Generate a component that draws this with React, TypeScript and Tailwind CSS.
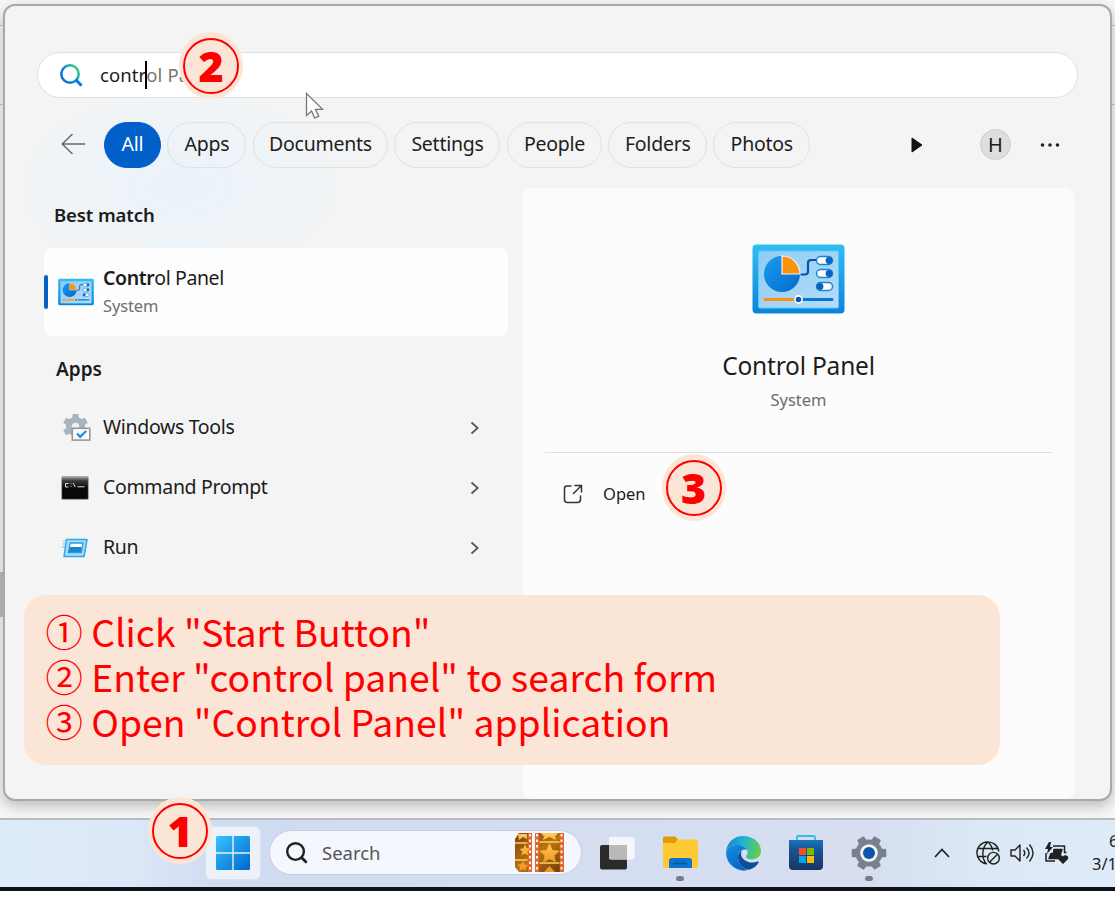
import type { ReactNode } from "react";

const chips = [
  { label: "All", box: "w-[57px] bg-[#005fc8] border-[#005fc8] text-white" },
  { label: "Apps", box: "w-[79px] border-[#e0e1e2] text-[#1d1d1d]" },
  { label: "Documents", box: "w-[135px] border-[#e0e1e2] text-[#1d1d1d]" },
  { label: "Settings", box: "w-[106px] border-[#e0e1e2] text-[#1d1d1d]" },
  { label: "People", box: "w-[95px] border-[#e0e1e2] text-[#1d1d1d]" },
  { label: "Folders", box: "w-[98.500px] border-[#e0e1e2] text-[#1d1d1d]" },
  { label: "Photos", box: "w-[96.500px] border-[#e0e1e2] text-[#1d1d1d]" },
];

function ControlPanelIcon({ className }: { className: string }) {
  return (
    <svg viewBox="0 0 93 70" className={className}>
      <defs>
        <linearGradient id="cpFrame" x1="0" y1="0" x2="0" y2="1">
          <stop offset="0" stopColor="#2fbdf6" />
          <stop offset="1" stopColor="#0b84dc" />
        </linearGradient>
        <linearGradient id="cpFace" x1="0" y1="0" x2="1" y2="1">
          <stop offset="0" stopColor="#8fcdf3" />
          <stop offset="1" stopColor="#b4dcf8" />
        </linearGradient>
        <linearGradient id="cpPie" x1="0" y1="0" x2="1" y2="1">
          <stop offset="0" stopColor="#1a9cf0" />
          <stop offset="1" stopColor="#0568cc" />
        </linearGradient>
      </defs>
      <rect x="0.5" y="0.5" width="92" height="69" rx="4" fill="url(#cpFrame)" />
      <rect x="6.5" y="7" width="80" height="57" rx="1.5" fill="url(#cpFace)" stroke="#62c6f7" />
      <circle cx="30" cy="30" r="18" fill="url(#cpPie)" />
      <path d="M30 30V12a18 18 0 0 1 18 18z" fill="#ff9208" stroke="#e8f5fd" strokeWidth="1.2" />
      <path d="M48.500 30.500h4.500q3 0 3-3V19q0-3 3-3h6" fill="none" stroke="#0754a8" strokeWidth="2.200" />
      {[16.5, 29.5, 42.5].map((y, i) => (
        <g key={y}>
          <rect x="64.500" y={y - 4} width="16" height="8" rx="4" fill="#fff" stroke="#1685d9" strokeWidth="1.5" />
          <circle cx={i === 2 ? 68 : 77} cy={y} r="3.400" fill="#0863bd" />
        </g>
      ))}
      <path d="M13 55.500h31" stroke="#fa9111" strokeWidth="3" strokeLinecap="round" />
      <path d="M50 55.500h30" stroke="#0875d2" strokeWidth="3" strokeLinecap="round" />
      <circle cx="46.500" cy="55.500" r="3.600" fill="#075cb2" stroke="#fff" strokeWidth="1.600" />
    </svg>
  );
}

function gear(cx: number, cy: number, teeth: number, outer: number, inner: number, start: number) {
  const points: string[] = [];
  const step = Math.PI / teeth;
  for (let i = 0; i < teeth; i++) {
    const a = i * 2 * step + start;
    [
      [-1, inner],
      [-0.55, inner],
      [-0.36, outer],
      [0.36, outer],
      [0.55, inner],
    ].forEach(([k, r]) => {
      points.push(`${cx + Math.cos(a + k * step) * r},${cy + Math.sin(a + k * step) * r}`);
    });
  }
  return points.join(" ");
}

function ToolsIcon() {
  return (
    <svg viewBox="0 0 28 28" className="ml-0.5 h-7 w-7">
      <polygon points={gear(12.5, 12.5, 6, 12, 8.8, -Math.PI / 2)} fill="#a7b3bf" stroke="#a7b3bf" strokeWidth="1.500" strokeLinejoin="round" />
      <circle cx="12.500" cy="12.500" r="3.800" fill="#edf0f2" />
      <rect x="9.300" y="14.300" width="17.500" height="11.800" fill="#fafbfb" stroke="#9b9691" strokeWidth="1.600" />
      <path d="m14 19.500 3.200 3.300 6-5.800" fill="none" stroke="#258be7" strokeWidth="2.300" />
    </svg>
  );
}

function PromptIcon() {
  return (
    <svg viewBox="0 0 28 24" className="h-6 w-7">
      <defs>
        <linearGradient id="cmdBar" x1="0" y1="0" x2="0" y2="1">
          <stop offset="0" stopColor="#a9a9a9" />
          <stop offset="0.180" stopColor="#3b3b3b" />
          <stop offset="0.500" stopColor="#080808" />
        </linearGradient>
      </defs>
      <rect x="0.600" y="0.600" width="26.800" height="22.800" rx="1" fill="url(#cmdBar)" stroke="#aaa" />
      <path d="M7.500 7.500H4.500V11h3M10 7.500v.8M10 10.200v.8M12 7l2.300 4M16.500 10.800h7" fill="none" stroke="#ddd" strokeWidth="1" />
    </svg>
  );
}

function RunIcon() {
  return (
    <svg viewBox="0 0 28 20" className="h-5 w-7">
      <path d="M5.500 1.500h20.500l-3 17H3z" fill="#a8dcfa" stroke="#2ba9ec" strokeWidth="1.500" strokeLinejoin="round" />
      <path d="M9.200 5h12.800l-1.800 9.500H7.400z" fill="#fff" stroke="#2a9ce2" strokeWidth="1.300" />
      <path d="M8.600 9h12.200l-1 5H7.800z" fill="#1686d6" />
      <path d="M2 3h3.500M1.500 6h3.500M1 9h3.500" stroke="#64bff0" strokeWidth="1" />
    </svg>
  );
}

function Search({ className, stroke }: { className: string; stroke: string }) {
  return (
    <svg viewBox="0 0 24 24" className={className} fill="none" stroke={stroke} strokeLinecap="round">
      <defs>
        <linearGradient id="lens" x1="0" y1="1" x2="1" y2="0.200">
          <stop offset="0.250" stopColor="#0873d8" />
          <stop offset="0.550" stopColor="#1689cf" />
          <stop offset="1" stopColor="#3ed07c" />
        </linearGradient>
      </defs>
      <circle cx="11" cy="11" r="8.700" strokeWidth="2.500" />
      <path d="m17.700 17.700 4 4" strokeWidth="3" stroke={stroke === "#202020" ? stroke : "#0873d8"} />
    </svg>
  );
}

function Badge({ value, place }: { value: string; place: string }) {
  return (
    <div className={`absolute flex h-[67px] w-16 items-center justify-center rounded-[50%] bg-[#fbe5d6] ${place}`}>
      <div className="flex h-14 w-14 items-center justify-center rounded-full border-2 border-[#f00] font-['Open_Sans','Noto_Sans',sans-serif] text-[43px] leading-none font-extrabold text-[#f00] not-italic">
        <span className="h-[42px] leading-[41px]">{value}</span>
      </div>
    </div>
  );
}

function ResultRow({ icon, label }: { icon: ReactNode; label: string }) {
  return (
    <div className="flex h-[60px] items-center">
      <div className="flex w-[59px] justify-start pl-[17px]">{icon}</div>
      <span className="-mt-px grow text-[19.500px] tracking-[-0.330px]">{label}</span>
      <svg viewBox="0 0 10 14" className="mr-7 h-3.5 w-2.5" fill="none" stroke="#555" strokeWidth="1.700">
        <path d="m1.500 1.500 6.200 5.500-6.200 5.500" />
      </svg>
    </div>
  );
}

function SearchWindow() {
  return (
    <section className="mt-1 ml-[3px] flex h-[797px] w-[1109px] shrink-0 flex-col rounded-[12px] border-2 border-[#a9a9a9] bg-[#f4f4f4] bg-[radial-gradient(ellipse_200px_120px_at_175px_180px,#eaf3fa,#f4f4f4)] shadow-[0_5px_14px_rgba(0,0,0,0.250)]">
      <div className="mt-[46px] ml-8 flex h-[46px] w-[1041px] shrink-0 items-center rounded-full border border-[#dfe0e1] bg-white pl-[21px]">
        <Search className="h-6 w-6" stroke="url(#lens)" />
        <div className="-mt-px ml-[17px] flex items-center text-[18.500px] tracking-[0.100px]">
          <span>contr</span>
          <span className="-mx-px h-7 w-0.5 bg-black" />
          <span className="text-[#777]">ol Pa</span>
        </div>
      </div>

      <nav className="mt-[23.500px] flex h-[46px] shrink-0 items-center pl-14">
        <svg viewBox="0 0 24 22" className="-mt-px h-[22px] w-6" fill="none" stroke="#666" strokeWidth="1.400">
          <path d="M24 11H1M11.500 1 1.200 11l10.300 10" />
        </svg>
        <div className="ml-[18.500px] flex gap-[6.500px]">
          {chips.map((c) => (
            <button key={c.label} className={`flex h-[46px] items-center justify-center rounded-full border-[1.500px] pb-px pl-px text-[19.500px] tracking-[-0.250px] ${c.box}`}>
              <span>{c.label}</span>
            </button>
          ))}
        </div>
        <svg viewBox="0 0 12 16" className="ml-[101px] h-4 w-3" fill="#111" stroke="#111" strokeLinejoin="round">
          <path d="M1 1v14l10-7z" />
        </svg>
        <span className="ml-[57px] flex h-[31px] w-[31px] items-center justify-center rounded-full border border-[#ccc] bg-[#dedede] pl-px text-[20px]">H</span>
        <svg viewBox="0 0 20 4" className="ml-[29px] h-1 w-5" fill="#222">
          <circle cx="2.500" cy="2" r="1.800" />
          <circle cx="10" cy="2" r="1.800" />
          <circle cx="17.500" cy="2" r="1.800" />
        </svg>
      </nav>

      <div className="mt-[20.500px] flex grow">
        <div className="ml-[39px] flex w-[464px] flex-col">
          <h2 className="mt-[13px] ml-2.5 h-7 text-[18.500px] leading-7 font-semibold tracking-[-0.100px]">Best match</h2>
          <div className="mt-[19px] flex h-[88px] items-center rounded-md bg-[#fdfdfd]">
            <span className="h-[34px] w-1 rounded bg-[#0562c5]" />
            <ControlPanelIcon className="ml-2.5 h-[28px] w-[36px]" />
            <div className="ml-[9px] flex flex-col">
              <span className="h-7 text-[19.500px] leading-7 tracking-[-0.400px]">
                <b className="font-semibold">Contr</b>ol Panel
              </span>
              <span className="h-7 text-[16.500px] leading-7 tracking-[-0.150px] text-[#707070]">System</span>
            </div>
          </div>
          <h2 className="mt-[19px] ml-3 h-7 text-[19px] leading-7 font-semibold">Apps</h2>
          <div className="mt-[14.500px] flex flex-col">
            <ResultRow icon={<ToolsIcon />} label="Windows Tools" />
            <ResultRow icon={<PromptIcon />} label="Command Prompt" />
            <ResultRow icon={<RunIcon />} label="Run" />
          </div>
        </div>

        <div className="ml-[15px] flex w-[551px] flex-col items-center rounded-lg bg-[#fcfcfc]">
          <ControlPanelIcon className="mt-14 h-[70px] w-[93px]" />
          <span className="mt-[34px] h-9 text-[24.500px] leading-9 tracking-[-0.200px]">Control Panel</span>
          <span className="mt-0.5 h-7 text-[16.500px] leading-7 text-[#6e6e6e]">System</span>
          <div className="mt-[38px] h-px w-[507px] bg-[#dedede]" />
          <div className="mt-[27px] flex h-7 w-full items-center pl-10">
            <svg viewBox="0 0 20 20" className="h-5 w-5" fill="none" stroke="#333" strokeWidth="1.500" strokeLinecap="round" strokeLinejoin="round">
              <path d="M8 2H4Q1.500 2 1.500 4.500v11Q1.500 18.500 4.500 18.500h10q3 0 3-3V12M12 1.500h6.500V8M18.200 1.800 10.500 9.500" />
            </svg>
            <span className="ml-5 text-[16.500px]">Open</span>
          </div>
        </div>
      </div>
    </section>
  );
}

function FilmIcon() {
  return (
    <svg viewBox="0 0 49 39" className="h-[39px] w-[49px]">
      <defs>
        <linearGradient id="film" x1="0" y1="0" x2="1" y2="1">
          <stop offset="0" stopColor="#7d3f0b" />
          <stop offset="0.500" stopColor="#b87412" />
          <stop offset="1" stopColor="#6b390b" />
        </linearGradient>
        <linearGradient id="starFill" x1="0" y1="0" x2="0" y2="1">
          <stop offset="0" stopColor="#ffc857" />
          <stop offset="1" stopColor="#f09422" />
        </linearGradient>
        <clipPath id="filmClip">
          <path d="M4 0h13v39H4L0 34V6zM20 0h29v39H20z" />
        </clipPath>
      </defs>
      <g clipPath="url(#filmClip)">
        <path d="M0 0h17v39H0zM20 0h29v39H20z" fill="url(#film)" />
        <path d="M15 0v39M22 0v39M47 0v39" stroke="#e2662e" strokeWidth="4.500" />
        <path d="M15 1v39M22 1v39M46.500 1v39" stroke="#fff0d8" strokeWidth="2" strokeDasharray="2.500 3" />
        <path d="M0 10h12.500M0 27h12.500M24.500 9h20M24.500 30h20" stroke="#ffd056" strokeWidth="1.500" />
        <path d="m34.500 10 3 7 7.200.8-5.200 4.800 1.500 7.200-6.500-3.700-6.500 3.700 1.500-7.200-5.200-4.800 7.200-.8z" fill="url(#starFill)" />
        <path d="m10 11 1.700 4 3.300.5-2.500 3 .7 4-3.200-2-3.500 2 .7-4L4.500 16l4-.8zM8 28l1.500 3.500 4 .5-3 2.500.7 3.500-3.200-2-3.500 2 .7-4L2 32l4-.8zM26 0h17l-3 3.500 1 3.500-6.500-3L28 7l1-3.500zM3 1h9v5L8 4 4 7zM29 39l5.500-6 5.500 6z" fill="url(#starFill)" />
      </g>
    </svg>
  );
}

function Slot({ children, running }: { children: ReactNode; running?: boolean }) {
  return (
    <div className="flex h-[68px] w-[36px] flex-col items-center pt-[16px]">
      <div className="flex h-9 w-9 items-center justify-center">{children}</div>
      {running && <span className="mt-[5px] h-[5px] w-2 rounded-full bg-[#777d87]" />}
    </div>
  );
}

function Taskbar() {
  return (
    <footer className="flex h-[69px] w-full shrink-0 items-center overflow-hidden border-t-2 border-[#b5bac3] bg-[linear-gradient(90deg,#deebf8_0%,#dce8f7_12%,#cfdbf1_20%,#d5def1_50%,#d6def0_78%,#dce8f6_88%,#dfebf8_100%)] pb-0.5">
      <div className="ml-[205px] flex h-[54px] w-14 shrink-0 items-center justify-center rounded-md border border-[#dce1ed] bg-[#edf1fa]">
        <svg viewBox="0 0 34 34" className="h-[34px] w-[34px]">
          <defs>
            <linearGradient id="win" gradientUnits="userSpaceOnUse" x1="0" y1="0" x2="34" y2="34">
              <stop offset="0" stopColor="#38c3ff" />
              <stop offset="1" stopColor="#0067cf" />
            </linearGradient>
          </defs>
          <path d="M1.500 0H16.300v16.300H0V1.500Q0 0 1.500 0zM17.700 0h14.800Q34 0 34 1.500V16.300H17.700zM0 17.700h16.300V34H1.500Q0 34 0 32.500zM17.700 17.700H34v14.800q0 1.500-1.500 1.500H17.700z" fill="url(#win)" />
        </svg>
      </div>
      <div className="ml-2 flex h-[45px] w-[313px] shrink-0 items-center rounded-full border border-[#c5cde0] bg-[#f4f7fd] pl-[15px]">
        <Search className="h-[23px] w-[23px]" stroke="#202020" />
        <span className="ml-3.5 grow text-[18.500px] text-[#555]">Search</span>
        <div className="mr-[17px]"><FilmIcon /></div>
      </div>
      <div className="ml-[17px] flex shrink-0 gap-[27px]">
        <Slot>
          <svg viewBox="0 0 36 36" className="h-9 w-9">
            <rect x="1" y="10" width="27" height="24.500" rx="2" fill="#2b2b2b" />
            <rect x="10" y="2" width="25.500" height="22.500" rx="2" fill="#f6f7f8" fillOpacity="0.950" />
            <path d="M10 10h18v14.500H12q-2 0-2-2z" fill="#b9b9b9" />
          </svg>
        </Slot>
        <Slot running>
          <svg viewBox="0 0 36 36" className="h-9 w-9">
            <path d="M1 2.500q0-1 1-1h11l3 3-3 4H1z" fill="#e39a09" />
            <path d="M1 8h12l3-3.500h18q2 0 2 2V31q0 2-2 2H3q-2 0-2-2z" fill="#ffc934" />
            <path d="M7 33v-7q0-3 3-3h17q3 0 3 3v7z" fill="#0c73ce" />
            <path d="M11 28.500h14" stroke="#07539e" strokeWidth="1.500" />
          </svg>
        </Slot>
        <Slot>
          <svg viewBox="0 0 36 36" className="h-9 w-9">
            <defs>
              <linearGradient id="edgeTop" x1="0" y1="0.300" x2="1" y2="0.500">
                <stop offset="0" stopColor="#1687d1" />
                <stop offset="0.500" stopColor="#26b7cf" />
                <stop offset="1" stopColor="#62d144" />
              </linearGradient>
              <linearGradient id="edgeMid" x1="0" y1="0" x2="0.700" y2="1">
                <stop offset="0" stopColor="#168ee2" />
                <stop offset="1" stopColor="#0563c2" />
              </linearGradient>
            </defs>
            <path d="M1 17C2 7 9 1 18.500 1 28 1 36 7.500 36 16c0 5.500-4.500 8.500-9 8.500-4 0-6-1.500-6-2.800 0-.9 1.700-1.900 1.700-4.200C22.500 13 18 10 12.500 10 7 10 3 12.500 1 17z" fill="url(#edgeTop)" />
            <path d="M1 18C2 12.500 7 10 12.500 10c4.500 0 8 2 9.500 5-5-1.500-9 1.500-9 7 0 7 5 12.500 11 12.800A18 18 0 0 1 1 18z" fill="url(#edgeMid)" />
            <path d="M17 15c-3 2-4 4-4 7 0 7.500 6 13.500 12 12.500 4-1.300 7-4 8.500-7 .4-.8-.3-1.300-1.100-.9-6 2.800-16-.5-16.400-7.600 0-1.600.3-2.900 1-4z" fill="#0d4e99" />
          </svg>
        </Slot>
        <Slot>
          <svg viewBox="0 0 36 36" className="h-9 w-9">
            <defs>
              <linearGradient id="store" x1="0" y1="0" x2="0" y2="1">
                <stop offset="0" stopColor="#1475be" />
                <stop offset="0.300" stopColor="#1a5596" />
                <stop offset="1" stopColor="#153565" />
              </linearGradient>
            </defs>
            <path d="M9 7V2.500Q9 1 10.500 1h15Q27 1 27 2.500V7" fill="none" stroke="#36b9ed" strokeWidth="1.800" />
            <path d="M1 5h34v26q0 4-4 4H5q-4 0-4-4z" fill="url(#store)" />
            <path d="M11 13h7v7h-7z" fill="#f25022" />
            <path d="M19 13h7v7h-7z" fill="#7fba00" />
            <path d="M11 21h7v7h-7z" fill="#00a4ef" />
            <path d="M19 21h7v7h-7z" fill="#ffb900" />
          </svg>
        </Slot>
        <Slot running>
          <svg viewBox="0 0 36 36" className="h-9 w-9">
            <polygon points={gear(18, 18, 6, 16.800, 12.8, 0)} fill="#77818a" stroke="#77818a" strokeWidth="1.500" strokeLinejoin="round" />
            <circle cx="18" cy="18" r="8.800" fill="#f1f3f5" />
            <circle cx="18" cy="18" r="6" fill="#0b56ad" />
          </svg>
        </Slot>
      </div>
      <div className="ml-[47px] flex shrink-0 items-center text-[#202020]">
        <svg viewBox="0 0 16 10" className="h-2.5 w-4" fill="none" stroke="currentColor" strokeWidth="1.700">
          <path d="m1 9 7-7.500L15 9" />
        </svg>
        <svg viewBox="0 0 24 24" className="ml-[26px] h-6 w-6" fill="none" stroke="currentColor" strokeWidth="1.400">
          <path d="M11 22.800A11 11 0 1 1 22.800 10.500M10 22.500C5.500 17 5.500 7 11.800 1c3 2.500 4.500 5.500 4.700 8.500M2.200 7.500h19.300M2 15.500h8.500" />
          <circle cx="17.500" cy="17.200" r="5.800" />
          <path d="m13.500 21.300 8-8" />
        </svg>
        <svg viewBox="0 0 24 24" className="ml-2.5 h-6 w-6" fill="none" stroke="currentColor" strokeWidth="1.400" strokeLinejoin="round">
          <path d="M1 9h4l5-5v16l-5-5H1zM13.500 9q2.500 3 0 6M16.500 6.500q5 5.500 0 11" />
          <path d="M19.500 3.500q7 8.500 0 17" />
        </svg>
        <svg viewBox="0 0 25 24" className="ml-2.5 h-6 w-[25px]" fill="none" stroke="currentColor" strokeWidth="1.500" strokeLinejoin="round">
          <path d="M9 5h11.500v6.500h2M2 12v8h9" />
          <path d="M10 8.500h8l-3 9H5l2-5h2.500z" fill="currentColor" />
          <path d="M5 1 1 8h3l-1 5 6-7H6l1-5z" fill="currentColor" stroke="none" />
          <path d="m19 23-5-5c-1.500-3 3-5.500 5-2.500 2-3 6.500-.5 5 2.500z" fill="currentColor" stroke="none" />
        </svg>
      </div>
      <div className="mb-0.5 ml-[23px] flex shrink-0 flex-col text-[16.500px] leading-[23px] text-[#222]">
        <span className="pl-[17px]">6</span>
        <span>3/1</span>
      </div>
    </footer>
  );
}

export default function App() {
  return (
    <main className="relative flex h-[902px] w-[1115px] flex-col overflow-hidden bg-white font-['Noto_Sans','Open_Sans',sans-serif] text-[#1c1c1c]">
      <div className="absolute top-0 left-0 flex h-[818px] w-full flex-col bg-[#f7f7f7]">
        <div className="h-[26px] border-b border-[#c9c9c9]" />
        <div className="h-[79px] border-b border-[#c9c9c9]" />
        <div className="h-[467px]" />
        <div className="h-[45px] w-1 bg-[#bfbfbf]" />
      </div>
      <div className="relative flex h-[818px] w-full shrink-0 overflow-hidden">
        <SearchWindow />
      </div>
      <Taskbar />
      <div className="h-1 w-full shrink-0 bg-[#0e131c]" />

      <svg viewBox="0 0 20 28" className="absolute top-[92px] left-[305px] h-7 w-5">
        <path d="M1.500 1.500v22l5-4.500 3.200 7 4-1.800-3.200-6.800h7z" fill="#fff" stroke="#777" strokeWidth="1.300" />
      </svg>
      <div className="absolute top-[595px] left-6 h-[170px] w-[976px] rounded-[22px] bg-[#fbe5d6] pt-[14px] pl-[21.500px] font-['Noto_Sans_CJK_JP','Noto_Sans',sans-serif] text-[37.330px] leading-[45px] text-[#f00]">
        <p>① Click "Start Button"</p>
        <p>② Enter "control panel" to search form</p>
        <p>③ Open "Control Panel" application</p>
      </div>
      <Badge value="2" place="top-8 left-[179px]" />
      <Badge value="3" place="top-[454px] left-[661.500px]" />
      <Badge value="1" place="top-[797px] left-[148px]" />
    </main>
  );
}
